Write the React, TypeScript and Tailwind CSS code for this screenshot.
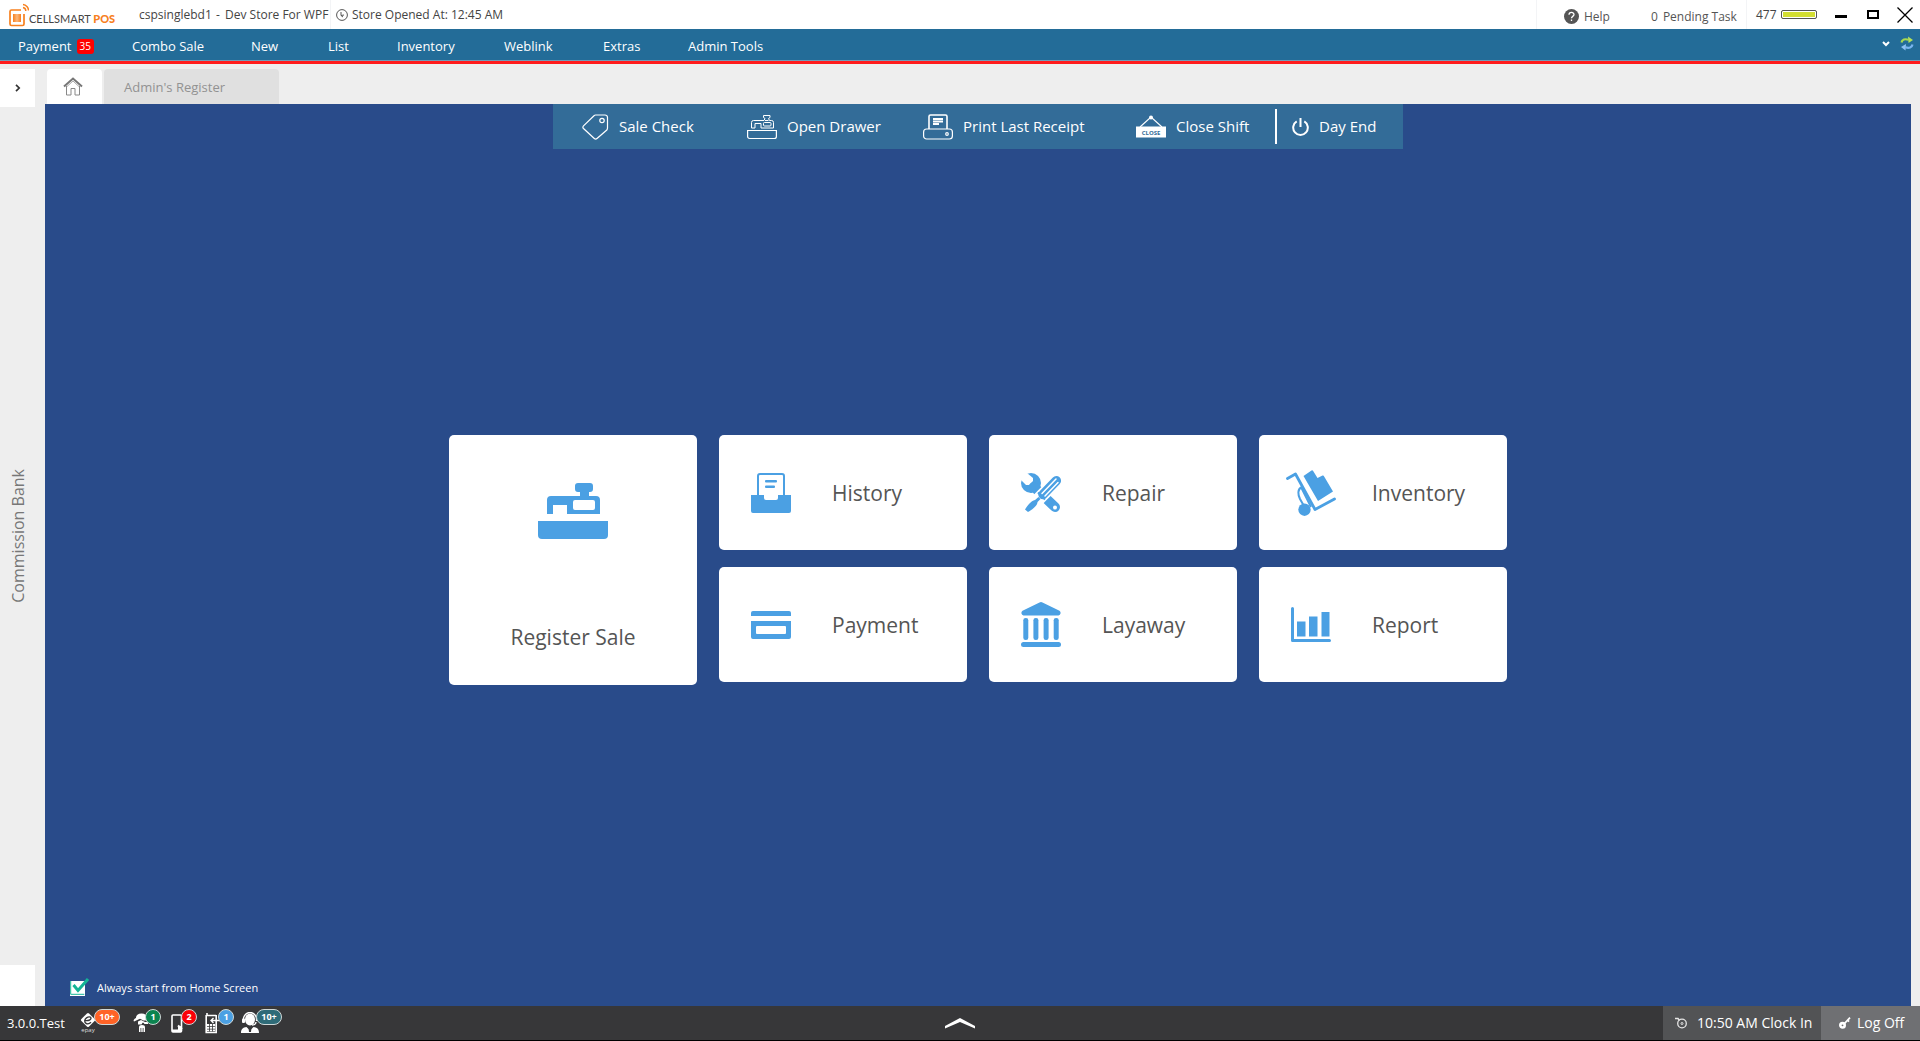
import React from "react";

type IconProps = { className?: string };

const menu = [
  { label: "Payment", width: "w-[114px]", badge: "35" },
  { label: "Combo Sale", width: "w-[119px]" },
  { label: "New", width: "w-[77px]" },
  { label: "List", width: "w-[69px]" },
  { label: "Inventory", width: "w-[107px]" },
  { label: "Weblink", width: "w-[99px]" },
  { label: "Extras", width: "w-[85px]" },
  { label: "Admin Tools", width: "w-[120px]" },
];

function Logo() {
  return (
    <svg width="20" height="24" viewBox="0 0 20 24" fill="none" aria-hidden="true">
      <defs>
        <linearGradient id="logoFill" x1="0" x2="1">
          <stop offset="0" stopColor="#f7801e" />
          <stop offset="0.5" stopColor="#fbb77c" />
          <stop offset="1" stopColor="#f7801e" />
        </linearGradient>
      </defs>
      <path d="M12 7H2.500A1.500 1.500 0 0 0 1 8.500v12.500a1.500 1.500 0 0 0 1.500 1.500h11a1.500 1.500 0 0 0 1.500-1.500V11" stroke="#f7801e" strokeWidth="1.700" />
      <rect x="4" y="11" width="8" height="8" fill="url(#logoFill)" />
      <path d="M14 4.500a3.500 3.500 0 0 1 2.800 3.500M14 1.500a6 6 0 0 1 5.500 6" stroke="#f7801e" strokeWidth="1.400" />
    </svg>
  );
}

function HomeIcon() {
  return (
    <svg width="20" height="19" viewBox="0 0 20 19" fill="none" aria-hidden="true">
      <path d="M1 9.500 10 1.500l9 8" stroke="#777" strokeWidth="2" />
      <path d="M3.500 9v9H8v-6.500h4V18h4.500V9" stroke="#888" />
      <path d="M4 9.500 10 4l6 5.500" stroke="#aaa" />
    </svg>
  );
}

function TagIcon() {
  return (
    <svg width="27" height="26" viewBox="0 0 27 26" fill="none" stroke="#fff" strokeWidth="1.200" aria-hidden="true">
      <path d="M13.500 1H23a2.500 2.500 0 0 1 2.500 2.500V14a3 3 0 0 1-.7 2L15 24.500a2 2 0 0 1-2.700 0L1.500 14.500a2 2 0 0 1 0-2.700L12 1.700c.4-.4.900-.7 1.500-.7Z" />
      <circle cx="20" cy="6.500" r="2.200" />
    </svg>
  );
}

function DrawerIcon() {
  return (
    <svg width="30" height="26" viewBox="0 0 30 26" fill="none" stroke="#fff" aria-hidden="true">
      <path d="M.6 16.500h28.800v6a2 2 0 0 1-2 2H2.600a2 2 0 0 1-2-2Z" strokeWidth="1.200" />
      <path d="M4.500 14V8.500a2 2 0 0 1 2-2H17l1-2-1.500-1V1.500h6.500v2L21.500 4.500l1 2h2a2 2 0 0 1 2 2V14H14V9.500H8V14Z" />
      <rect x="16.500" y="8.500" width="7.500" height="3.500" rx="1" />
      <path d="M18 6.500h3.500" />
    </svg>
  );
}

function PrinterIcon() {
  return (
    <svg width="30" height="26" viewBox="0 0 30 26" fill="none" stroke="#fff" strokeWidth="1.200" aria-hidden="true">
      <path d="M6 15V2.500A1.500 1.500 0 0 1 7.500 1h15A1.500 1.500 0 0 1 24 2.500V15" strokeWidth="1.600" />
      <rect x=".6" y="15" width="28.800" height="10" rx="3" />
      <path d="M10 5h10M10 7.500h10M10 10h6" strokeWidth="2" />
      <circle cx="24" cy="20" r="1.300" />
    </svg>
  );
}

function CloseSignIcon() {
  return (
    <svg width="30" height="24" viewBox="0 0 30 24" aria-hidden="true">
      <path d="M4 12 15 2l11 10" fill="none" stroke="#fff" strokeWidth="1.100" />
      <circle cx="15" cy="2.500" r="2" fill="#fff" />
      <rect y="11.500" width="30" height="11" fill="#fff" />
      <text x="15" y="19.500" textAnchor="middle" fontSize="6" fontWeight="700" fill="#336c98" fontFamily="Open Sans, sans-serif">CLOSE</text>
    </svg>
  );
}

function PowerIcon() {
  return (
    <svg width="17" height="18" viewBox="0 0 17 18" fill="none" stroke="#fff" strokeWidth="2" aria-hidden="true">
      <path d="M4.700 3.400a7.300 7.300 0 1 0 7.600 0M8.500 0v9" />
    </svg>
  );
}

function RegisterIcon() {
  return (
    <svg width="70" height="56" viewBox="0 0 70 56" fill="#4ba0e3" aria-hidden="true">
      <path d="M0 38h70v14a4 4 0 0 1-4 4H4a4 4 0 0 1-4-4Z" />
      <path fillRule="evenodd" d="M9 31V17a4 4 0 0 1 4-4h29V9h-2a3 3 0 0 1-3-3V3a3 3 0 0 1 3-3h12a3 3 0 0 1 3 3v3a3 3 0 0 1-3 3h-1v4h7a4 4 0 0 1 4 4v14H29v-9H15v9Zm28-14a2 2 0 0 0-2 2v6a2 2 0 0 0 2 2h18a2 2 0 0 0 2-2v-6a2 2 0 0 0-2-2Z" />
    </svg>
  );
}

function HistoryIcon() {
  return (
    <svg width="40" height="40" viewBox="0 0 40 40" fill="#4ba0e3" aria-hidden="true">
      <path d="M7 24V3a2 2 0 0 1 2-2h22a2 2 0 0 1 2 2v21" fill="none" stroke="#4ba0e3" strokeWidth="2" />
      <path d="M0 22h13v3a2 2 0 0 0 2 2h10a2 2 0 0 0 2-2v-3h13v16a2 2 0 0 1-2 2H2a2 2 0 0 1-2-2Z" />
      <rect x="14" y="7" width="12" height="2.400" rx="1" />
      <rect x="14" y="12.500" width="10" height="2.400" rx="1" />
    </svg>
  );
}

function PaymentIcon() {
  return (
    <svg width="40" height="28" viewBox="0 0 40 28" fill="#4ba0e3" aria-hidden="true">
      <path d="M0 5V2a2 2 0 0 1 2-2h36a2 2 0 0 1 2 2v3Z" />
      <path fillRule="evenodd" d="M0 10h40v16a2 2 0 0 1-2 2H2a2 2 0 0 1-2-2Zm6 5a1 1 0 0 0-1 1v6a1 1 0 0 0 1 1h28a1 1 0 0 0 1-1v-6a1 1 0 0 0-1-1Z" />
    </svg>
  );
}

function RepairIcon() {
  return (
    <svg width="40" height="40" viewBox="0 0 40 40" fill="#4ba0e3" aria-hidden="true">
      <circle cx="10" cy="10" r="10" />
      <path d="M0 0h6l6 5v3l-4 4H5L0 7Z" fill="#fff" />
      <path d="M13 14 34 34" stroke="#4ba0e3" strokeWidth="10" strokeLinecap="round" fill="none" />
      <circle cx="34" cy="34.500" r="2" fill="#fff" />
      <path d="m35.500 8-14 14L6 38" stroke="#fff" strokeWidth="13" fill="none" />
      <path d="M15 10a10 10 0 0 1-5 10l-2-3Z" />
      <path d="M35.300 7.700 22 21.500" stroke="#4ba0e3" strokeWidth="9.500" strokeLinecap="round" fill="none" />
      <path d="m17 19.500 7 7" stroke="#4ba0e3" strokeWidth="2" />
      <path d="M35 6 21 20.500M37 9.500 24 23" stroke="#fff" strokeWidth="1.500" strokeLinecap="round" />
      <path d="m17.500 24 2 2-3 3c0 4-6 8-9.500 10L4 36.500c2-3 6-9 10-9.500Z" />
    </svg>
  );
}

function InventoryIcon() {
  return (
    <svg width="50" height="46" viewBox="0 0 50 46" fill="#4ba0e3" aria-hidden="true">
      <path d="m1.500 8.500 8-4.500L29 39.500 48.500 29" stroke="#4ba0e3" strokeWidth="2.800" strokeLinecap="round" strokeLinejoin="round" fill="none" />
      <path d="m17.500 6 8-5.500a1 1 0 0 1 1.500.2L31.500 8 36.500 5.500a1 1 0 0 1 1.200.3L47 21.500 32 31Z" />
      <circle cx="18.500" cy="39.700" r="6.200" />
      <path d="M16 17c-5 2-4 8-2 12l4 7M15.500 18 25 37" stroke="#4ba0e3" strokeWidth="2" fill="none" />
    </svg>
  );
}

function LayawayIcon() {
  return (
    <svg width="40" height="45" viewBox="0 0 40 45" fill="#4ba0e3" aria-hidden="true">
      <path d="M18.500.500a3 3 0 0 1 3 0L38.500 8.700A2.700 2.700 0 0 1 37.500 13.500h-35A2.700 2.700 0 0 1 1.500 8.700Z" />
      <rect x="2.300" y="16" width="5" height="22" rx="2.300" />
      <rect x="12.400" y="16" width="5" height="22" rx="2.300" />
      <rect x="22.600" y="16" width="5" height="22" rx="2.300" />
      <rect x="32.700" y="16" width="5" height="22" rx="2.300" />
      <rect y="40" width="40" height="5" rx="2.500" />
    </svg>
  );
}

function ReportIcon() {
  return (
    <svg width="40" height="35" viewBox="0 0 40 35" fill="#4ba0e3" aria-hidden="true">
      <path d="M1.500 1.500V33.500H38.500" stroke="#4ba0e3" strokeWidth="3" strokeLinecap="round" strokeLinejoin="round" fill="none" />
      <rect x="6" y="14.500" width="8.500" height="15" />
      <rect x="18" y="9.500" width="8.500" height="20" />
      <rect x="30.500" y="5" width="8" height="24.500" />
    </svg>
  );
}

function EpayIcon() {
  return (
    <svg width="16" height="22" viewBox="0 0 16 22" fill="none" aria-hidden="true">
      <rect x="2.600" y="2.600" width="10.800" height="10.800" rx="1.500" transform="rotate(45 8 8)" fill="#fff" />
      <path d="M5 8.500c3 .5 6-.5 6-2.200S8.500 4.500 6.500 5.800 4 10 6 11.300s4 0 5-1" stroke="#373739" strokeWidth="1.400" />
      <text x="8" y="19.500" textAnchor="middle" fontSize="6" fill="#ddd" fontFamily="Open Sans, sans-serif">epay</text>
    </svg>
  );
}

function AgentIcon() {
  return (
    <svg width="16" height="22" viewBox="0 0 16 22" fill="#fff" aria-hidden="true">
      <path d="M3 6c0-3 2-4.500 5.500-4.500S14 3 14 6l1.500 2.500h-5L7 6.800 1 9.500C0 8.500 1 7 3 6Z" />
      <path d="M5 9.500 8 8l4 2h3v2h-3.500l-1-1.200h-1L8.500 12.500H5Z" />
      <path d="M6 20v-4.500C6 13.700 7 13 9 13s3 .7 3 2.500V20h-1.500v-4h-3v4Z" />
      <path d="M8.300 16h1.400v4H8.300Z" />
    </svg>
  );
}

function PhoneIcon() {
  return (
    <svg width="16" height="22" viewBox="0 0 16 22" fill="none" aria-hidden="true">
      <rect x="1" y="3" width="9.500" height="17" rx="1" stroke="#fff" strokeWidth="1.600" />
      <path d="M1 17.500h6V15l3-1 1 6H1Z" fill="#fff" />
      <path d="M7 13.500 11 17" stroke="#fff" strokeWidth="2" />
    </svg>
  );
}

function HandsetIcon() {
  return (
    <svg width="16" height="22" viewBox="0 0 16 22" fill="none" stroke="#fff" aria-hidden="true">
      <path d="M2 1v3M1.200 3.500h10M1.200 3V20.500h10V3" strokeWidth="1.600" />
      <path d="M15 8.500H6M8.500 6 6 8.500 8.500 11" strokeWidth="1.400" />
      <path d="M2 13h9M2 15.700h9M2 18.400h9" strokeWidth="1.900" strokeDasharray="2.200 .8" />
    </svg>
  );
}

function SupportIcon() {
  return (
    <svg width="18" height="22" viewBox="0 0 18 22" fill="#fff" aria-hidden="true">
      <ellipse cx="9" cy="7.500" rx="5" ry="6" />
      <path d="M2.500 9V7a6.500 6.500 0 0 1 13 0v2M15 10c0 2-2 3-4 3" fill="none" stroke="#fff" strokeWidth="1.400" />
      <rect x="1" y="6.500" width="3" height="4.500" rx="1" />
      <path d="M0 21c0-4 2-5.500 5.500-6L9 18.500l3.500-3.500c3.500.5 5.500 2 5.500 6Z" />
      <path d="m7.500 15.500 1.500 1 1.500-1-.5 4.500H8Z" fill="#373739" />
    </svg>
  );
}

function RefreshIcon() {
  return (
    <svg width="14" height="15" viewBox="0 0 14 15" fill="none" aria-hidden="true">
      <path d="M1.500 6.500C2 3.500 5 2.500 8.500 3.800" stroke="#a9d84f" strokeWidth="2.200" />
      <path d="M8 .5 13 4 8.500 7Z" fill="#b4e05a" />
      <path d="M12.500 8.500c-.5 3-3.500 4-7 2.800" stroke="#79b4ee" strokeWidth="2.200" />
      <path d="M6 8 1 11l4.500 3.500Z" fill="#8cc0f2" />
    </svg>
  );
}

const actions = [
  { label: "Sale Check", Icon: TagIcon, width: "w-[165px]", slot: "w-[37px]" },
  { label: "Open Drawer", Icon: DrawerIcon, width: "w-[176px]", slot: "w-[40px]" },
  { label: "Print Last Receipt", Icon: PrinterIcon, width: "w-[213px]", slot: "w-[40px]" },
  { label: "Close Shift", Icon: CloseSignIcon, width: "w-[139px]", slot: "w-[40px]" },
];

const tiles = [
  { label: "History", Icon: HistoryIcon },
  { label: "Repair", Icon: RepairIcon },
  { label: "Inventory", Icon: InventoryIcon },
  { label: "Payment", Icon: PaymentIcon },
  { label: "Layaway", Icon: LayawayIcon },
  { label: "Report", Icon: ReportIcon },
];

const alerts: { name: string; count: string; Icon: React.FC<IconProps>; width: string; badge: string }[] = [
  { name: "Epay", count: "10+", Icon: EpayIcon, width: "w-[53px]", badge: "left-[14px] w-[26px] bg-[#ff6326]" },
  { name: "Agents", count: "1", Icon: AgentIcon, width: "w-[38px]", badge: "left-[12px] w-4 bg-[#0c8450]" },
  { name: "Phones", count: "2", Icon: PhoneIcon, width: "w-[34px]", badge: "left-[10px] w-4 bg-[#fb0007]" },
  { name: "Handsets", count: "1", Icon: HandsetIcon, width: "w-[36px]", badge: "left-[13px] w-4 bg-[#4ba0e3]" },
  { name: "Support", count: "10+", Icon: SupportIcon, width: "w-[42px]", badge: "left-[15px] w-[26px] bg-[#2f6b78]" },
];

function TitleBar() {
  return (
    <header className="flex h-[29px] shrink-0 items-center bg-white text-xs text-[#444]">
      <div className="flex w-[139px] items-center pl-[9px]">
        <Logo />
        <span className="pt-[9px] font-['Lato'] text-[11px] leading-4 whitespace-nowrap text-[#444]">
          CELLSMART <b className="font-black text-[#f7801e]">POS</b>
        </span>
      </div>
      <span className="w-[77px]">cspsinglebd1</span>
      <span className="w-[9px]">-</span>
      <span className="w-[105px] whitespace-nowrap">Dev Store For WPF</span>
      <span className="flex h-full items-center gap-1 border-l border-gray-100 pl-[5px]">
        <svg width="12" height="12" viewBox="0 0 12 12" fill="none" stroke="#555" aria-hidden="true">
          <circle cx="6" cy="6" r="5.400" />
          <path d="M5 3v3.500L8 6M5 6.500 7 8" />
        </svg>
        Store Opened At: 12:45 AM
      </span>
      <div className="ml-auto flex h-full items-center">
        <div className="flex h-full w-[210px] items-center border-l border-gray-100 pt-1 pl-[27px] text-[#555]">
          <button className="flex w-[87px] items-center gap-[5px]">
            <svg width="15" height="15" viewBox="0 0 15 15" aria-hidden="true">
              <circle cx="7.500" cy="7.500" r="7.500" fill="#555" />
              <path d="M5 5.800c0-3.200 5-3.200 5-.2 0 1.800-2.500 1.800-2.500 3.600M7.500 10.500V12" fill="none" stroke="#fff" strokeWidth="1.300" />
            </svg>
            Help
          </button>
          <button className="flex gap-[5px] whitespace-nowrap">
            <span>0</span>
            <span>Pending Task</span>
          </button>
        </div>
        <div className="flex h-full w-[89px] items-center gap-1 border-l border-gray-100 pl-[9px]">
          <span>477</span>
          <span className="h-[9px] w-9 rounded-[2px] border border-[#555] bg-[#d3de32] p-px ring-1 ring-white ring-inset" />
        </div>
        <button aria-label="Minimize" className="flex h-5 w-8 items-center">
          <span className="mt-[3px] h-[3px] w-3 bg-black" />
        </button>
        <button aria-label="Maximize" className="flex h-5 w-[30px] items-center">
          <span className="h-[9px] w-3 border-2 border-black" />
        </button>
        <button aria-label="Close" className="w-[23px]">
          <svg width="16" height="16" viewBox="0 0 16 16" stroke="#000" strokeWidth="1.300" aria-hidden="true">
            <path d="m.5.500 15 15M15.500.500l-15 15" />
          </svg>
        </button>
      </div>
    </header>
  );
}

export default function App() {
  return (
    <div className="flex h-screen flex-col bg-[#eeeeee] font-['Open_Sans',sans-serif] text-[#444]">
      <TitleBar />

      <nav className="h-[35px] shrink-0 border-b-3 border-[#ff1c1c] bg-[#236c98] text-[13px] text-white">
        <div className="flex h-full items-center border-b border-[#6f9cb8] pl-[18px]">
          {menu.map((m) => (
            <button key={m.label} className={"flex items-center gap-[5px] pt-1 text-left whitespace-nowrap " + m.width}>
              {m.label}
              {m.badge && <span className="rounded-[3px] bg-[#ff0000] px-[3px] text-[10px] leading-[15px]">{m.badge}</span>}
            </button>
          ))}
          <div className="mr-[6px] mb-[2px] ml-auto flex items-center gap-[10px]">
            <button aria-label="More">
              <svg width="8" height="6" viewBox="0 0 8 6" fill="none" stroke="#fff" strokeWidth="2" aria-hidden="true">
                <path d="m1 1 3 3 3-3" />
              </svg>
            </button>
            <button aria-label="Refresh">
              <RefreshIcon />
            </button>
          </div>
        </div>
      </nav>

      <div className="flex min-h-0 flex-1">
        <aside className="flex w-[45px] shrink-0 flex-col pt-[5px]">
          <button aria-label="Expand" className="flex h-[38px] w-[35px] items-center justify-center bg-white">
            <svg width="6" height="8" viewBox="0 0 6 8" fill="none" stroke="#333" strokeWidth="1.700" aria-hidden="true">
              <path d="m1 .8 3.200 3.200L1 7.200" />
            </svg>
          </button>
          <div className="flex w-[35px] flex-1 items-center justify-center">
            <span className="rotate-180 text-base whitespace-nowrap text-[#777] [writing-mode:vertical-rl]">Commission Bank</span>
          </div>
          <div className="h-[41px] w-[35px] bg-white" />
        </aside>

        <main className="mr-[9px] flex flex-1 flex-col">
          <div className="flex h-10 gap-[2px] pt-[5px] pl-[2px]">
            <button aria-label="Home" className="flex w-[55px] items-center justify-center rounded-t bg-white pr-1">
              <HomeIcon />
            </button>
            <button className="w-[175px] rounded-t bg-[#e0e0e0] pt-[2px] pl-5 text-left text-[13px] text-[#929292]">Admin's Register</button>
          </div>

          <section className="flex flex-1 flex-col items-center bg-[#294b8a]">
            <div className="flex h-[45px] w-[850px] items-center bg-[#336c98] pl-[29px] text-[15px] text-white">
              {actions.map(({ label, Icon, width, slot }) => (
                <button key={label} className={"flex items-center whitespace-nowrap " + width}>
                  <span className={"shrink-0 " + slot}>
                    <Icon />
                  </span>
                  {label}
                </button>
              ))}
              <span className="h-[35px] w-[2px] bg-white" />
              <button className="flex items-center gap-[10px] pl-[15px] whitespace-nowrap">
                <PowerIcon />
                Day End
              </button>
            </div>

            <div className="flex flex-1 items-center gap-[22px] text-[21px] text-[#555]">
              <button className="flex h-[250px] w-[248px] flex-col items-center justify-between rounded-[5px] bg-white pt-12 pb-8">
                <RegisterIcon />
                Register Sale
              </button>
              <div className="grid h-[250px] grid-cols-3 content-start gap-x-[22px] gap-y-[17px]">
                {tiles.map(({ label, Icon }) => (
                  <button key={label} className="flex h-[115px] w-[248px] items-center rounded-[5px] bg-white pl-[26px] text-left">
                    <span className="w-[87px]">
                      <span className="flex w-[52px] justify-center">
                        <Icon />
                      </span>
                    </span>
                    <span className="pt-[2px]">{label}</span>
                  </button>
                ))}
              </div>
            </div>

            <div className="flex h-[35px] w-full items-center pl-[25px]">
              <label className="relative flex items-center gap-3 text-[11px] text-white">
                <input type="checkbox" defaultChecked className="peer size-[15px] appearance-none bg-white" />
                <svg className="absolute bottom-[2px] left-0 hidden peer-checked:block" width="19" height="17" viewBox="0 0 19 17" fill="none" aria-hidden="true">
                  <path d="M.7 3v13.300h13.600" stroke="#13b596" strokeWidth="1" />
                  <path d="m3.500 7 4.500 5.500L18 1" stroke="#13b596" strokeWidth="3" />
                </svg>
                Always start from Home Screen
              </label>
            </div>
          </section>
        </main>
      </div>

      <footer className="flex h-[35px] shrink-0 items-center border-b border-black bg-[#373739] text-sm text-white">
        <div className="flex flex-1 items-center">
          <span className="w-[80px] pl-[7px] text-[13px]">3.0.0.Test</span>
          {alerts.map(({ name, count, Icon, width, badge }) => (
            <button key={name} aria-label={name} className={"relative h-[22px] " + width}>
              <Icon />
              <span className={"absolute -top-[3px] h-4 rounded-full border border-[#cfd8d8] text-center text-[9px] leading-[14px] font-bold " + badge}>{count}</span>
            </button>
          ))}
        </div>
        <button aria-label="Show panel">
          <svg width="30" height="11" viewBox="0 0 30 11" fill="#fff" aria-hidden="true">
            <path d="M15 0 30 8v2.500L15 4 0 10.500V8Z" />
          </svg>
        </button>
        <div className="flex h-full flex-1 justify-end">
          <button className="flex w-[158px] items-center gap-[10px] bg-[#525355] pl-3 whitespace-nowrap">
            <svg width="12" height="12" viewBox="0 0 12 12" fill="none" stroke="#e5e5e5" aria-hidden="true">
              <circle cx="7" cy="6.500" r="4.300" strokeWidth="1.300" />
              <path d="M0 1.500h3l1.500 2" strokeWidth="1.600" />
              <circle cx="7" cy="6.500" r="1" />
            </svg>
            10:50 AM Clock In
          </button>
          <button className="flex w-[99px] items-center gap-[6px] bg-[#6f7073] pl-[18px] whitespace-nowrap">
            <svg width="12" height="12" viewBox="0 0 12 12" fill="none" stroke="#fff" aria-hidden="true">
              <circle cx="3.500" cy="8.300" r="2.200" strokeWidth="2.600" />
              <path d="m5 7 6-6.300M8.500 3l1.500 1.700" strokeWidth="1.800" />
            </svg>
            Log Off
          </button>
        </div>
      </footer>
    </div>
  );
}
